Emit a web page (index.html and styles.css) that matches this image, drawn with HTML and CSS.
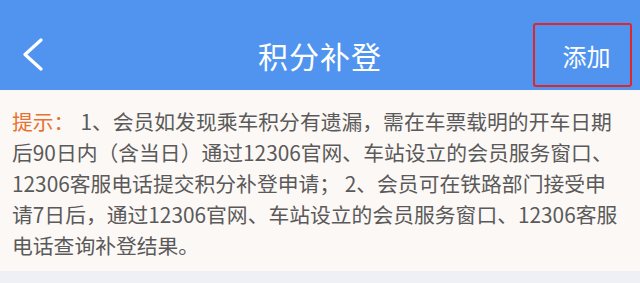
FILE: index.html
```html
<!DOCTYPE html>
<html lang="zh-CN">
<head>
<meta charset="utf-8">
<title>积分补登</title>
<link rel="stylesheet" href="styles.css">
</head>
<body>
<header class="nav">
  <div class="nav-left">
    <svg class="back" width="22" height="34" viewBox="0 0 22 34" aria-hidden="true">
      <polyline points="19,2 3,16.5 19,31" fill="none" stroke="#fff" stroke-width="3.2" stroke-linecap="round" stroke-linejoin="round"/>
    </svg>
  </div>
  <h1 class="title">积分补登</h1>
  <div class="nav-right">
    <button class="add">添加</button>
  </div>
</header>
<section class="notice">
  <p><span class="label">提示：</span>1、会员如发现乘车积分有遗漏，需在车票载明的开车日期后90日内（含当日）通过12306官网、车站设立的会员服务窗口、12306客服电话提交积分补登申请； 2、会员可在铁路部门接受申请7日后，通过12306官网、车站设立的会员服务窗口、12306客服电话查询补登结果。</p>
</section>
<div class="rest"></div>
</body>
</html>
```

FILE: styles.css
```css
html, body {
  margin: 0;
  padding: 0;
}
body {
  width: 640px;
  height: 283px;
  overflow: hidden;
  background: #eef0f5;
  font-family: "Noto Sans CJK SC", "Noto Sans", sans-serif;
}
.nav {
  height: 90px;
  box-sizing: border-box;
  padding-top: 20px;
  background: #5094f0;
  display: grid;
  grid-template-columns: 1fr auto 1fr;
  align-items: center;
  color: #fff;
}
.nav-left {
  display: flex;
  align-items: center;
  padding-left: 22px;
}
.back {
  display: block;
}
.title {
  margin: 0;
  font-size: 30px;
  font-weight: 400;
  letter-spacing: 1px;
  line-height: 70px;
}
.nav-right {
  display: flex;
  justify-content: flex-end;
  padding-right: 8px;
}
.add {
  width: 99px;
  height: 64px;
  box-sizing: border-box;
  border: 2px solid #e0262a;
  border-radius: 3px;
  background: transparent;
  color: #fff;
  font-family: "Noto Sans CJK SC", sans-serif;
  font-size: 24px;
  padding: 0 0 0 8px;
  display: flex;
  align-items: center;
  justify-content: center;
}
.notice {
  background: #fcf8f5;
  padding: 16px 15px 10px 12px;
}
.notice p {
  margin: 0;
  font-size: 20.8px;
  line-height: 31px;
  color: #5a5a5a;
}
.label {
  color: #e8712f;
  margin-right: 6px;
}
.rest {
  height: 20px;
}
```
